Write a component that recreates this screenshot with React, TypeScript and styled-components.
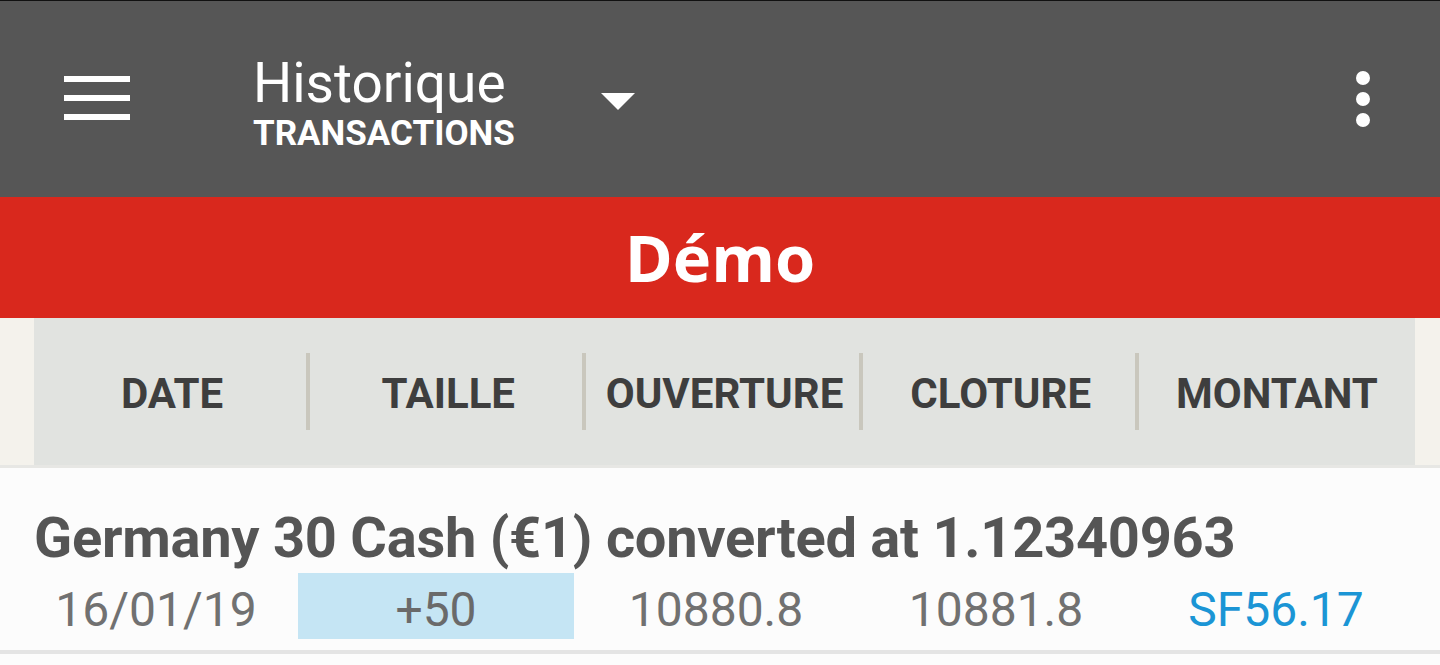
import React from 'react';
import styled, { createGlobalStyle } from 'styled-components';

const GlobalStyle = createGlobalStyle`
  html, body {
    margin: 0;
    padding: 0;
    background: #fcfcfc;
    font-family: Roboto, 'Liberation Sans', sans-serif;
  }
`;

const Page = styled.div`
  width: 1440px;
  height: 665px;
  overflow: hidden;
  background: #fcfcfc;
`;

const TopBar = styled.header`
  display: flex;
  align-items: center;
  height: 196px;
  border-top: 1px solid #111111;
  background: #565656;
  padding: 0 70px 0 64px;
`;

const Hamburger = styled.div`
  display: flex;
  flex-direction: column;
  gap: 13px;
  width: 66px;
  margin-top: -3px;
`;

const Bar = styled.span`
  display: block;
  height: 6px;
  background: #ffffff;
`;

const TitleBlock = styled.div`
  display: flex;
  flex-direction: column;
  width: 348px;
  margin-left: 123px;
  margin-top: 8px;
  color: #ffffff;
`;

const Title = styled.span`
  font-size: 55px;
  line-height: 55px;
  font-weight: 400;
`;

const Subtitle = styled.span`
  font-size: 35px;
  line-height: 34px;
  font-weight: 700;
  margin-top: 6px;
`;

const Caret = styled.span`
  width: 0;
  height: 0;
  border-left: 17.5px solid transparent;
  border-right: 17.5px solid transparent;
  border-top: 17px solid #ffffff;
  margin-top: 4px;
`;

const Kebab = styled.div`
  display: flex;
  flex-direction: column;
  gap: 7px;
  margin-left: auto;
`;

const Dot = styled.span`
  display: block;
  width: 14px;
  height: 14px;
  border-radius: 50%;
  background: #ffffff;
`;

const Banner = styled.div`
  display: flex;
  align-items: center;
  justify-content: center;
  height: 121px;
  background: #d9281d;
  color: #ffffff;
  font-family: 'Open Sans', Roboto, sans-serif;
  font-weight: 700;
  font-size: 65px;
  line-height: 65px;
`;

const HeadWrap = styled.div`
  background: #f4f2ec;
  padding: 0 25px 0 34px;
  border-bottom: 3px solid #e7e7e4;
`;

const HeadGrid = styled.div`
  display: grid;
  grid-template-columns: repeat(5, 1fr);
  align-items: center;
  height: 147px;
  background: #e1e3e0;
`;

const HeadCell = styled.div<{ $divider?: boolean }>`
  display: flex;
  align-items: center;
  justify-content: center;
  height: 77px;
  padding-top: 4px;
  box-sizing: border-box;
  border-left: ${({ $divider }) => ($divider ? '4px solid #c9c7bd' : '4px solid transparent')};
  margin-left: -4px;
  color: #3e3e3e;
  font-size: 42px;
  line-height: 42px;
  font-weight: 700;
  white-space: nowrap;
`;

const Row = styled.div`
  padding: 42px 0 11px 0;
  border-bottom: 4px solid #e4e4e4;
`;

const RowTitle = styled.div`
  padding-left: 34px;
  color: #555555;
  font-size: 56px;
  line-height: 57px;
  letter-spacing: -0.25px;
  font-weight: 700;
  white-space: nowrap;
`;

const DataGrid = styled.div`
  display: grid;
  grid-template-columns: repeat(5, 280px);
  padding-left: 16px;
  margin-top: 6px;
`;

const DataCell = styled.div<{ $highlight?: boolean; $accent?: boolean }>`
  height: 66px;
  box-sizing: border-box;
  padding-top: 7px;
  margin: 0 2px;
  text-align: center;
  font-size: 48px;
  line-height: 59px;
  font-weight: 400;
  color: ${({ $accent, $highlight }) => ($accent ? '#1b95d5' : $highlight ? '#6a6a6a' : '#717171')};
  background: ${({ $highlight }) => ($highlight ? '#c5e5f4' : 'transparent')};
`;

const columns = ['DATE', 'TAILLE', 'OUVERTURE', 'CLOTURE', 'MONTANT'];

export default function App() {
  return (
    <Page>
      <GlobalStyle />
      <TopBar>
        <Hamburger>
          <Bar />
          <Bar />
          <Bar />
        </Hamburger>
        <TitleBlock>
          <Title>Historique</Title>
          <Subtitle>TRANSACTIONS</Subtitle>
        </TitleBlock>
        <Caret />
        <Kebab>
          <Dot />
          <Dot />
          <Dot />
        </Kebab>
      </TopBar>
      <Banner>Démo</Banner>
      <HeadWrap>
        <HeadGrid>
          {columns.map((col, i) => (
            <HeadCell key={col} $divider={i > 0}>
              {col}
            </HeadCell>
          ))}
        </HeadGrid>
      </HeadWrap>
      <Row>
        <RowTitle>Germany 30 Cash (€1) converted at 1.12340963</RowTitle>
        <DataGrid>
          <DataCell>16/01/19</DataCell>
          <DataCell $highlight>+50</DataCell>
          <DataCell>10880.8</DataCell>
          <DataCell>10881.8</DataCell>
          <DataCell $accent>SF56.17</DataCell>
        </DataGrid>
      </Row>
    </Page>
  );
}
